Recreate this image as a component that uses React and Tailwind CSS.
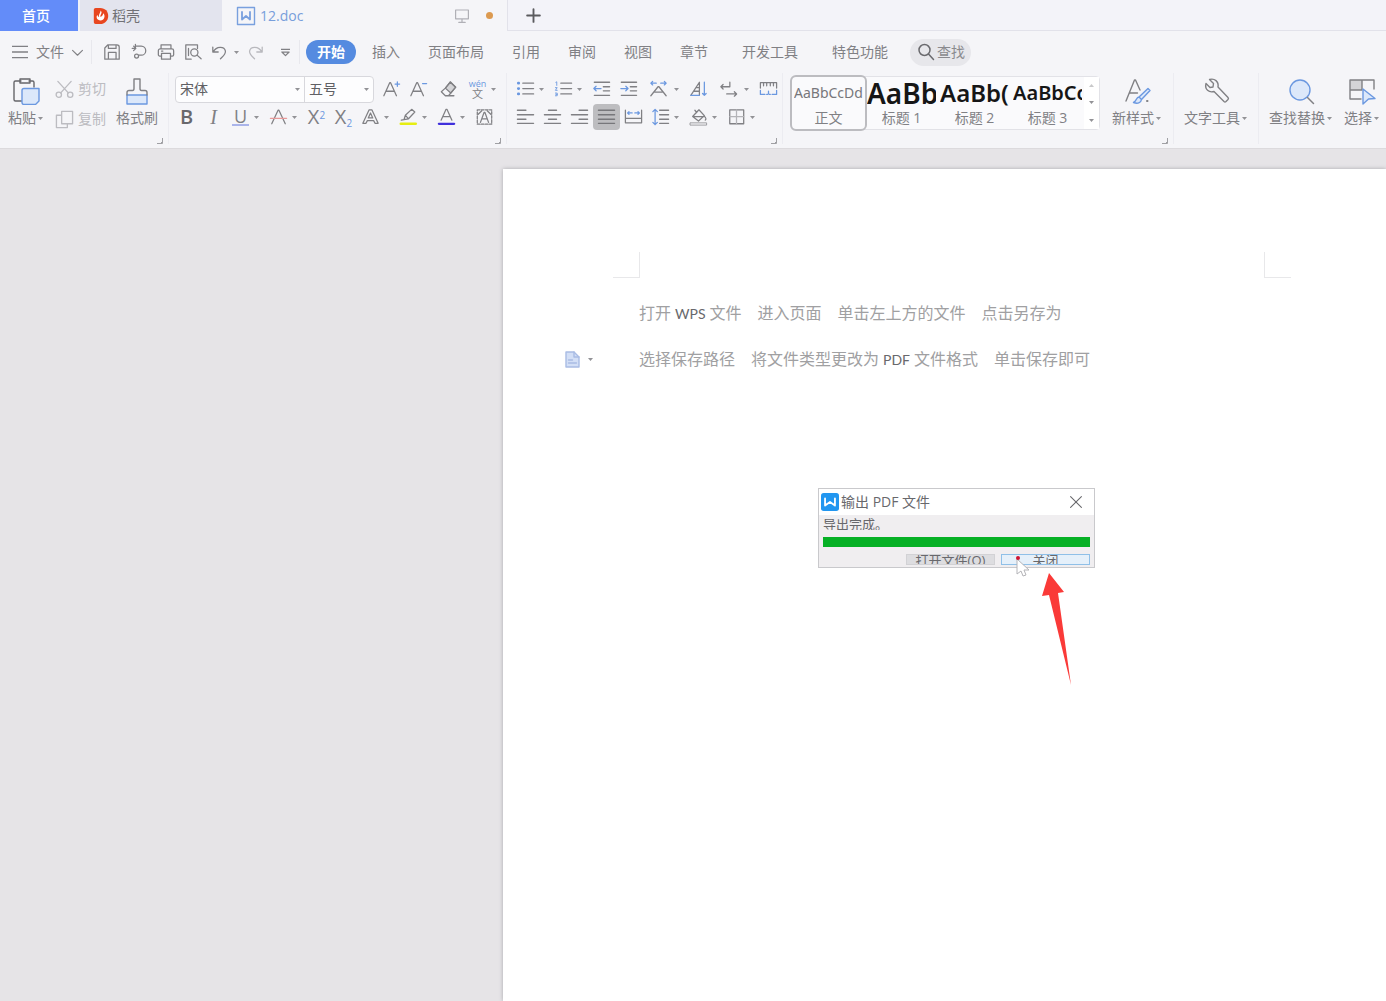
import { Fragment } from "react";

const blue = "#6b98e0";

const Icon = ({ children, className = "w-5 h-5", box = "0 0 20 20" }) => (
    <svg
        className={`shrink-0 ${className}`}
        viewBox={box}
        fill="none"
        stroke="currentColor"
        strokeWidth={1.4}
        strokeLinecap="round"
        strokeLinejoin="round"
        aria-hidden="true"
    >
        {children}
    </svg>
);

const Caret = () => (
    <svg className="w-[5px] h-[3px] shrink-0" viewBox="0 0 5 3" aria-hidden="true">
        <path d="M0 0h5L2.500 3z" fill="#929296" />
    </svg>
);

const Corner = () => (
    <svg className="absolute right-[5px] bottom-0 w-1.5 h-1.5" viewBox="0 0 6 6" fill="none" stroke="#a0a0a4" aria-hidden="true">
        <path d="M5.500 0v5.500H0M3.500 5.500l2-2" />
    </svg>
);

const icons = {
    save: <path d="M2 18v-12.500l3.500-3.500h10a2.500 2.500 0 012.500 2.500v13.500zM6 2.500v3.500h8.500V3M6 17.500v-7h8.500v7" />,
    export: <path d="M2.500 6h3M6.500 3.500h6a5 5 0 010 10H9.500M6 1.500v4M4 3.500L6.500 6 4 8.500M9.500 14.500a2.200 2.200 0 11-2.200-2.200c1.500 0 2.200 1 2.200 2.200z" />,
    print: (
        <>
            <path d="M4.500 6.500V2h11v4.500M5 14.500H3a1.500 1.500 0 01-1.500-1.500V8.500a2 2 0 012-2h13a2 2 0 012 2V13a1.500 1.500 0 01-1.500 1.500h-2" />
            <path d="M5 11.500h10v6.500H5zM5 9h1.500" />
        </>
    ),
    preview: (
        <>
            <path d="M8 18H2V2h13v4" />
            <circle cx="11.500" cy="10.500" r="4" />
            <path d="M14.500 13.500l4.500 4M5 6v8" />
        </>
    ),
    undo: <path d="M2 4.500v5.500h6M2.500 10C6 3 15 3.500 16 9c.4 3.500-2.500 5.500-5.500 8.500" />,
    redo: <path d="M18 4.500v5.500h-6M17.500 10C14 3 5 3.500 4 9c-.4 3.500 2.500 5.500 5.500 8.500" />,
    grow: (
        <>
            <path d="M1.500 17.500L8 3h1l6.500 14.500M4.500 12.500h8" />
            <path d="M16.500 2v5M14 4.500h5" stroke={blue} />
        </>
    ),
    shrink: (
        <>
            <path d="M1.500 17.500L8 3h1l6.500 14.500M4.500 12.500h8" />
            <path d="M14.500 4h4.500" stroke={blue} />
        </>
    ),
    eraser: (
        <>
            <path d="M6.500 9l5.500-6.500 6 5.500-5.500 6.500z" fill="#d4d4d7" />
            <path d="M6.500 9L2 13l4.500 4.500h3.500L18 8l-6-6zM9 17.500h7" />
        </>
    ),
    strike: (
        <>
            <path d="M2.500 17.500L9.500 2.500h1l7 15" />
            <path d="M1 11.500h18" stroke="#e89a9a" />
        </>
    ),
    outlineA: (
        <>
            <path d="M1.500 17L8.500 2h3l7 15h-3.500l-1.500-3h-7L5 17z" />
            <path d="M7.500 11L10 5.500l2.500 5.500z" />
        </>
    ),
    highlight: (
        <>
            <path d="M5 13l1.500-5L13.500 1.500l3.500 3-7 7.500zM6.500 8l3.500 4M5 13l-3 .500" />
            <path d="M1.500 17.500h16.500" stroke="#e6ee12" strokeWidth={3} />
        </>
    ),
    fontColor: (
        <>
            <path d="M4 13.500L9.500 1.500h1L16 13.500M6.500 9.500h7" />
            <path d="M1.500 17.500h17" stroke="#4030dc" strokeWidth={2.500} />
        </>
    ),
    boxedA: (
        <>
            <path d="M2 2h16v16H2z" strokeDasharray="3 1.500" />
            <path d="M5.500 16L9.500 5h1l4 11M7 12h6M3 7l4-4M13 3l4 4" />
        </>
    ),
    bullets: (
        <>
            <path d="M7 3.500h12M7 9.500h12M7 15.500h12" />
            <path d="M2 3.500h.500M2 9.500h.500M2 15.500h.500" stroke={blue} strokeWidth={3} />
        </>
    ),
    numbers: (
        <>
            <path d="M7 3.500h12M7 9.500h12M7 15.500h12" />
            <path d="M1.500 2.500l1-.500v4M1 8.500h2l-2 3h2M1 14.500h2v3H1M1.500 16h1.500" stroke={blue} strokeWidth={1} />
        </>
    ),
    outdent: (
        <>
            <path d="M2 2.500h17M12 7.500h7M12 12h7M2 17h17" />
            <path d="M9.500 9.500H1.500M4 7L1.500 9.500 4 12" stroke={blue} />
        </>
    ),
    indent: (
        <>
            <path d="M2 2.500h17M12 7.500h7M12 12h7M2 17h17" />
            <path d="M1.500 9.500h8M7 7l2.500 2.500L7 12" stroke={blue} />
        </>
    ),
    asian: (
        <>
            <path d="M1.500 17.500L9.500 7.500h1l8 10M6 13.500h8" />
            <path d="M7.500 3.500H1.500M3.500 1.500l-2 2 2 2M12.500 3.500h6M16.500 1.500l2 2-2 2" stroke={blue} />
        </>
    ),
    sort: (
        <>
            <path d="M1.500 17L11 2.500v14.500M5 12.500h6M8 8.500h3" />
            <path d="M1.500 17H11M16.500 2.500v14.500M14.500 15l2 2 2-2" stroke={blue} />
        </>
    ),
    tabs: <path d="M11.500 2.500v5H1.500M4 5L1.500 7.500 4 10M8 15.500h11M16.500 13l2.500 2.500-2.500 2.500" />,
    ruler: (
        <>
            <path d="M1 9V3h18v6M4.500 3.500v3M8 3.500v3M12 3.500v3M15.500 3.500v3" />
            <path d="M1 11.500V16h5M14 16h5v-4.500M8 16h1M11 16h1M10 12.500v3" stroke={blue} />
        </>
    ),
    left: <path d="M1 2.500h9.500M1 7.500h18M1 12.500h9.500M1 17h18" />,
    center: <path d="M5.500 2.500h9M1 7.500h18M5.500 12.500h9M1 17h18" />,
    right: <path d="M9.500 2.500H19M1 7.500h18M9.500 12.500H19M1 17h18" />,
    justify: <path d="M1 2.500h18M1 7.500h18M1 12.500h18M1 17h18" />,
    distribute: (
        <>
            <path d="M1 2.500v14h18v-14M1 11.500h18" />
            <path d="M8.500 5.500h-5M5 4L3.500 5.500 5 7M11.500 5.500h5M15 4l1.500 1.500L15 7" stroke={blue} />
        </>
    ),
    spacing: (
        <>
            <path d="M9 2.500h10M9 7.500h10M9 12.500h10M9 17h10" />
            <path d="M4 1.500v17M1.500 4L4 1.500 6.500 4M1.500 16L4 18.500 6.500 16" stroke={blue} />
        </>
    ),
    fill: (
        <>
            <path d="M3.500 9.500l7-7.500 6 6.500-6.500 6zM3.500 9.500h13M8 5L6 2.500M16.500 9c1.500 1.500 2.500 3 1 4.500" />
            <path d="M1 16.500h18v2.500H1z" strokeWidth={0.8} />
        </>
    ),
    border: (
        <>
            <path d="M2.500 2h15.500v15.500H2.500z" />
            <path d="M10 2v15.500M2.500 9.500h15.500" stroke="#b4b4b8" />
        </>
    ),
};

// text glyph tools use real letters instead of a drawing
const glyphs = {
    bold: <span className="text-xl leading-5 font-semibold text-[#68686c]">B</span>,
    italic: <span className="font-['Liberation_Serif',serif] text-xl leading-5 italic">I</span>,
    underline: <span className="text-lg leading-4 border-b-2 border-[#aab4ea] px-0.5">U</span>,
    sup: <span className="text-xl leading-5">X<sup className="text-[10px] text-[#6b98e0]">2</sup></span>,
    sub: <span className="text-xl leading-5">X<sub className="text-[10px] text-[#6b98e0]">2</sub></span>,
    pinyin: (
        <span className="flex flex-col items-center">
            <span className="text-[9px] leading-[9px] text-[#6b98e0]">wén</span>
            <span className="text-[11px] leading-[12px]">文</span>
        </span>
    ),
};

const fontTop = [
    { id: "grow", label: "增大字号" },
    { id: "shrink", label: "减小字号" },
    { id: "eraser", label: "清除格式", wide: true },
    { id: "pinyin", label: "拼音指南", menu: true },
];

const fontBottom = [
    { id: "bold", label: "加粗" },
    { id: "italic", label: "倾斜" },
    { id: "underline", label: "下划线", menu: true },
    { id: "strike", label: "删除线", menu: true },
    { id: "sup", label: "上标" },
    { id: "sub", label: "下标" },
    { id: "outlineA", label: "文字效果", menu: true },
    { id: "highlight", label: "突出显示", menu: true },
    { id: "fontColor", label: "字体颜色", menu: true },
    { id: "boxedA", label: "字符底纹" },
];

const paraTop = [
    { id: "bullets", label: "项目符号", menu: true },
    { id: "numbers", label: "编号", menu: true },
    { id: "outdent", label: "减少缩进量" },
    { id: "indent", label: "增加缩进量" },
    { id: "asian", label: "中文版式", wide: true, menu: true },
    { id: "sort", label: "排序" },
    { id: "tabs", label: "显示编辑标记", wide: true, menu: true },
    { id: "ruler", label: "制表位" },
];

const paraBottom = [
    { id: "left", label: "左对齐" },
    { id: "center", label: "居中对齐" },
    { id: "right", label: "右对齐" },
    { id: "justify", label: "两端对齐", active: true },
    { id: "distribute", label: "分散对齐" },
    { id: "spacing", label: "行距", menu: true },
    { id: "fill", label: "底纹颜色", menu: true },
    { id: "border", label: "边框", menu: true },
];

const menus = ["插入", "页面布局", "引用", "审阅", "视图", "章节"];

const styles = [
    { name: "正文", sample: "AaBbCcDd", cls: "text-sm text-[#77777b]", active: true },
    { name: "标题 1", sample: "AaBb", cls: "text-[28px] font-semibold text-[#161616]" },
    { name: "标题 2", sample: "AaBb(", cls: "text-2xl font-semibold text-[#161616]" },
    { name: "标题 3", sample: "AaBbCc", cls: "text-xl font-semibold text-[#161616]" },
];

const ToolRow = ({ items }) => (
    <div className="flex items-center h-7">
        {items.map((t) => (
            <button key={t.id} aria-label={t.label} className="flex items-center h-[26px]">
                <span
                    className={`flex items-center justify-center h-[26px] ${t.wide ? "w-8" : "w-[27px]"} ${t.active ? "bg-[#bdbdc0] rounded-sm text-[#77777b]" : ""}`}
                >
                    {glyphs[t.id] || <Icon className="w-[19px] h-[18px]">{icons[t.id]}</Icon>}
                </span>
                {t.menu && (
                    <span className="w-[11px] flex">
                        <Caret />
                    </span>
                )}
            </button>
        ))}
    </div>
);

const BigButton = ({ icon, label, menu = true }) => (
    <button className="flex flex-col items-center shrink-0 h-[54px]">
        <span className="h-8 flex items-center">{icon}</span>
        <span className="flex items-center gap-0.5 text-sm leading-[22px] whitespace-nowrap">
            {label}
            {menu && <Caret />}
        </span>
    </button>
);

const Divider = () => <div className="w-px h-6 bg-[#e8e8ed]" />;

const TabBar = () => (
    <div className="flex h-[31px] bg-[#f0f1f8] text-sm">
        <button className="w-[78px] pr-1.5 bg-[#638cf9] text-white font-medium">首页</button>
        <button className="w-[142px] ml-0.5 pl-3 flex items-center gap-0.5 bg-[#e3e4ee] text-[#717175]">
            <Icon className="w-[18px] h-[18px]">
                <path d="M4 1h5c6 0 9 4 9 9s-4 9-9 9H4a2 2 0 01-2-2V3a2 2 0 012-2z" fill="#e8461f" stroke="none" />
                <path d="M9.500 4c3 3-1 4.500 0 7 2-.5 2.500-2 3-4 3 3 1 8-3 8s-5.500-4-3.500-6c.5 1.500 1 2 2 2C7 8.500 9.500 7 9.500 4z" fill="#fff" stroke="none" />
            </Icon>
            稻壳
        </button>
        <div className="w-[286px] flex items-center px-3.5 border-r border-[#e2e2ea] bg-[#f5f5f8]">
            <Icon className="w-5 h-5 text-[#79a0de]">
                <path d="M1.500 1.500h17v17h-17z" />
                <path d="M6 6v7.500l4-3.500 4 3.500V6" strokeWidth={1.800} />
            </Icon>
            <span className="pl-1 text-[#789edb]">12.doc</span>
            <Icon className="w-4 h-4 ml-auto text-[#b0b0b6]">
                <path d="M2 2.500h16v11H2zM10 13.500V18M6 18h8" strokeWidth={1.500} />
            </Icon>
            <span className="w-[7px] h-[7px] ml-4 rounded-full bg-[#dc9a50]" />
        </div>
        <button aria-label="新建" className="w-[50px] flex items-center justify-center border-b border-[#e2e2ea] bg-[#f3f3f9] text-[#5a5a5e]">
            <Icon className="w-[15px] h-[15px]">
                <path d="M10 1.500v17M1.500 10h17" strokeWidth={2.500} />
            </Icon>
        </button>
        <div className="flex-1 border-b border-[#e2e2ea] bg-[#f3f3f9]" />
    </div>
);

const MenuBar = () => (
    <nav className="flex items-center h-[42px] pl-3 text-sm whitespace-nowrap">
        <button className="flex items-center gap-2">
            <Icon className="w-4 h-4">
                <path d="M0 3h20M0 10h20M0 17h20" strokeWidth={1.800} />
            </Icon>
            文件
            <Icon className="w-[11px] h-[11px]">
                <path d="M1 6l9 9 9-9" strokeWidth={2} />
            </Icon>
        </button>
        <div className="pl-2 pr-1.5">
            <Divider />
        </div>
        {["save", "export", "print", "preview", "undo"].map((id) => (
            <button key={id} aria-label={id} className="w-[27px] flex justify-center">
                <Icon className="w-[18px] h-[18px]">{icons[id]}</Icon>
            </button>
        ))}
        <span className="w-1.5 flex justify-center">
            <Caret />
        </span>
        <button aria-label="redo" className="w-8 flex justify-center text-[#b8b8bd]">
            <Icon className="w-[18px] h-[18px]">{icons.redo}</Icon>
        </button>
        <button aria-label="more" className="w-7 flex justify-center">
            <Icon className="w-[9px] h-[9px]" box="0 0 10 10">
                <path d="M0 1.500h10M1 4.500h8L5 8.500z" />
            </Icon>
        </button>
        <Divider />
        <button className="ml-1.5 mr-0.5 w-[50px] h-6 rounded-full bg-[#558be0] text-white font-bold">开始</button>
        {menus.map((m) => (
            <button key={m} className="px-3.5">
                {m}
            </button>
        ))}
        <button className="pl-5 pr-3.5">开发工具</button>
        <button className="pl-5 pr-4">特色功能</button>
        <button className="ml-1.5 h-[27px] px-1.5 flex items-center gap-px rounded-full bg-[#e7e7eb] text-[#8a8a8e]">
            <Icon className="w-5 h-5 text-[#6a6a6e]">
                <circle cx="8.500" cy="8" r="5.500" strokeWidth={1.500} />
                <path d="M12.500 12l5 5.500" strokeWidth={1.500} />
            </Icon>
            查找
        </button>
    </nav>
);

const FontSelect = ({ label, value, className }) => (
    <div className={`relative flex items-center ${className}`}>
        <select aria-label={label} defaultValue={value} className="w-full h-[25px] pl-1 appearance-none bg-transparent text-sm text-[#606064] outline-none">
            <option>{value}</option>
        </select>
        <span className="absolute right-1 pointer-events-none">
            <Caret />
        </span>
    </div>
);

const Ribbon = () => (
    <div className="flex h-[75px] pb-1">
        <section className="relative w-[169px] shrink-0 flex items-start pt-0.5 pl-2 border-r border-[#ececf1]">
            <BigButton
                label="粘贴"
                icon={
                    <Icon className="w-7 h-7" box="0 0 28 28">
                        <path d="M9 4H3.500a1.500 1.500 0 00-1.500 1.500v17A1.500 1.500 0 003.500 24H10M17 4h3.500A1.500 1.500 0 0122 5.500V10M8 2h10v4H8z" stroke="#66666a" />
                        <path d="M12 11.500h15V24l-3.500 3.500H12a2 2 0 01-2-2v-12a2 2 0 012-2z" fill="#dce8fa" stroke={blue} />
                    </Icon>
                }
            />
            <div className="flex flex-col pl-3 text-sm text-[#bcbcc1]">
                <button className="h-7 flex items-center gap-1">
                    <Icon className="w-[19px] h-[19px]">
                        <path d="M3 1.500l11 12M17 1.500L6 13.500" />
                        <circle cx="4" cy="15.500" r="2.800" />
                        <circle cx="16" cy="15.500" r="2.800" />
                    </Icon>
                    剪切
                </button>
                <button className="h-8 flex items-center gap-1">
                    <Icon className="w-[19px] h-[19px]">
                        <path d="M7 1.500h11.500v13H7zM7 5.500H1.500v13H13v-4" />
                    </Icon>
                    复制
                </button>
            </div>
            <div className="pl-2.5">
                <BigButton
                    label="格式刷"
                    menu={false}
                    icon={
                        <Icon className="w-7 h-7" box="0 0 28 28">
                            <path d="M4 18h20v9H4z" fill="#dce8fa" stroke={blue} />
                            <path d="M4 18v-2.500a2 2 0 012-2h3.500q1.500 0 1.500-2V2h6v9.500q0 2 1.500 2H22a2 2 0 012 2V18" />
                        </Icon>
                    }
                />
            </div>
            <Corner />
        </section>

        <section className="relative w-[338px] shrink-0 pt-0.5 pl-1 border-r border-[#ececf1]">
            <div className="flex items-center gap-1 pl-0.5">
                <div className="flex shrink-0 bg-[#fdfdfe] border border-[#d8d8dd] rounded-sm">
                    <FontSelect label="字体" value="宋体" className="w-[129px] border-r border-[#d8d8dd]" />
                    <FontSelect label="字号" value="五号" className="w-[68px]" />
                </div>
                <ToolRow items={fontTop} />
            </div>
            <ToolRow items={fontBottom} />
            <Corner />
        </section>

        <section className="relative w-[276px] shrink-0 pt-0.5 pl-[5px] border-r border-[#ececf1]">
            <ToolRow items={paraTop} />
            <ToolRow items={paraBottom} />
            <Corner />
        </section>

        <section className="relative w-[391px] shrink-0 flex items-start pt-0.5 pl-2 border-r border-[#ececf1]">
            <div className="flex w-[309px] h-[54px] mt-px mr-3 border border-[#e2e2e7] rounded-sm bg-[#fafafc]">
                {styles.map((s) => (
                    <button
                        key={s.name}
                        className={`flex-1 min-w-0 h-[52px] overflow-hidden flex flex-col items-start rounded-sm ${s.active ? "outline-2 outline-[#bcbcc0]" : ""}`}
                    >
                        <span className="h-8 px-0.5 flex items-center w-full">
                            <span className={`overflow-hidden leading-8 whitespace-nowrap font-['Noto_Sans',sans-serif] ${s.cls}`}>{s.sample}</span>
                        </span>
                        <span className="w-full text-center text-sm leading-[18px]">{s.name}</span>
                    </button>
                ))}
                <div className="w-[15px] flex flex-col items-center justify-around bg-white">
                    {["up", "down", "all"].map((d) => (
                        <button key={d} aria-label={d} className={`h-4 flex items-center ${d === "up" ? "rotate-180 opacity-50" : ""}`}>
                            <Caret />
                        </button>
                    ))}
                </div>
            </div>
            <BigButton
                label="新样式"
                icon={
                    <Icon className="w-7 h-7" box="0 0 28 28">
                        <path d="M3 24L11.500 3h1L17 13M6.500 16h8" />
                        <path d="M25 11.500l2 2-8.500 9-2.500-2.500zM16 20c-3 0-2 4-5.500 5.500 4 1.500 7.500.5 8-3z" fill="#dce8fa" stroke={blue} />
                        <path d="M24 24h.500" strokeWidth={2} />
                    </Icon>
                }
            />
            <Corner />
        </section>

        <section className="w-[85px] shrink-0 pt-0.5 pl-2.5 flex border-r border-[#ececf1]">
            <BigButton
                label="文字工具"
                icon={
                    <Icon className="w-7 h-7" box="0 0 28 28">
                        <path d="M7.500 2.500c5-1.500 9.500 2 8.500 7.500l10 10.500a1.500 1.500 0 010 2l-2 2a1.500 1.500 0 01-2 0L12 14.500c-5 1.500-9.500-2-8-8l4 4 3-.500.500-3.500z" />
                    </Icon>
                }
            />
        </section>

        <section className="shrink-0 pt-0.5 pl-2.5 flex gap-3">
            <BigButton
                label="查找替换"
                icon={
                    <Icon className="w-7 h-7" box="0 0 28 28">
                        <circle cx="13" cy="13" r="10" fill="#dce8fa" stroke={blue} />
                        <path d="M20.500 20.500l6 6" strokeWidth={1.500} />
                    </Icon>
                }
            />
            <BigButton
                label="选择"
                icon={
                    <Icon className="w-7 h-7" box="0 0 28 28">
                        <path d="M2 3h12v10H2z" fill="#d4d4d7" stroke="none" />
                        <path d="M13 22H2V3h24v9M14 3v10H2" />
                        <path d="M15 12l12 9.500-6.500.5L15 27z" fill="#dce8fa" stroke={blue} />
                    </Icon>
                }
            />
        </section>
    </div>
);

const Dialog = () => (
    <div role="dialog" aria-label="输出 PDF 文件" className="absolute left-[315px] top-[319px] w-[277px] border border-[#c9c9cc] bg-[#f0eef0] text-[#68686c]">
        <div className="flex items-center h-[26px] pl-0.5 pr-3 bg-white text-sm">
            <Icon className="w-[18px] h-[18px]">
                <rect width="20" height="20" rx="3" fill="#2196f0" stroke="none" />
                <path d="M4.500 6v8l5.500-4 5.500 4V6" stroke="#fff" strokeWidth={2} />
            </Icon>
            <span className="pl-0.5">输出 PDF 文件</span>
            <button aria-label="关闭窗口" className="ml-auto">
                <Icon className="w-3 h-3">
                    <path d="M1 1l18 18M19 1L1 19" strokeWidth={1.800} />
                </Icon>
            </button>
        </div>
        <div className="px-1 pb-0.5">
            <p className="h-[15px] mb-[7px] overflow-hidden text-[13px] leading-[18px]">导出完成。</p>
            <div role="progressbar" aria-valuenow={100} className="h-2.5 bg-[#06b025]" />
            <div className="flex justify-end gap-1.5 pt-[7px] text-[13px] leading-[10px]">
                <button className="w-[89px] h-[11px] overflow-hidden flex items-center justify-center bg-[#dddde0] border border-[#d2d2d5]">打开文件(O)</button>
                <button className="w-[89px] h-[11px] overflow-hidden flex items-center justify-center bg-[#e5f0fa] border border-[#8fc0e8]">关闭</button>
            </div>
        </div>
        {/* mouse pointer */}
        <svg className="absolute left-[196px] top-[65px] w-4 h-[23px]" viewBox="0 0 16 23" aria-hidden="true">
            <path d="M2 5v15l4-3 2 5 3-1-2-5h5z" fill="#fff" stroke="#b4b4b8" />
            <circle cx="3" cy="4" r="2" fill="#cf1232" />
        </svg>
    </div>
);

const paragraphs = [
    ["打开", "WPS", "文件　进入页面　单击左上方的文件　点击另存为"],
    ["选择保存路径　将文件类型更改为", "PDF", "文件格式　单击保存即可"],
];

const Page = () => (
    <article className="relative flex-1 ml-[503px] mt-5 bg-white shadow-[0_0_4px_#a8a8ac]">
        <div className="flex pt-[83px] pl-[110px]">
            <div className="w-[27px] h-[26px] border-r border-b border-[#e8e8ea]" />
            <div className="w-[624px]" />
            <div className="w-[27px] h-[26px] border-l border-b border-[#e8e8ea]" />
        </div>
        <div className="pt-3 pl-[62px] text-base text-[#a0a0a2]">
            {paragraphs.map(([before, latin, after], i) => (
                <Fragment key={latin}>
                    <div className="flex items-center h-[46px]">
                        <div className="w-[74px] shrink-0">
                            {i === 1 && (
                                <button aria-label="段落布局" className="flex items-center gap-2">
                                    <Icon className="w-[15px] h-[17px] text-[#a9bce4]" box="0 0 15 17">
                                        <path d="M1 1h8l5 5v10H1z" fill="#d3dff6" />
                                        <path d="M9 1v5h5M3.500 9h4M3.500 12h8" />
                                    </Icon>
                                    <Caret />
                                </button>
                            )}
                        </div>
                        <p>
                            {before}
                            <span className="px-1 font-['Lato',sans-serif] text-sm text-[#68686c]">{latin}</span>
                            {after}
                        </p>
                    </div>
                </Fragment>
            ))}
        </div>
        <Dialog />
        {/* red pointer towards the close button */}
        <svg className="absolute left-[538px] top-[403px] w-8 h-[114px]" viewBox="0 0 32 114" aria-hidden="true">
            <path d="M8 1l15 19-6 1 13 92L8 23l-7 1z" fill="#fa3a38" />
        </svg>
    </article>
);

const App = () => (
    <div className="min-h-screen flex flex-col overflow-hidden bg-[#e6e4e7] font-['Open_Sans','Noto_Sans_CJK_SC',sans-serif] text-[#808084]">
        <header className="bg-[#f5f5f8] border-b border-[#dcdadd]">
            <TabBar />
            <MenuBar />
            <Ribbon />
        </header>
        <main className="flex-1 flex flex-col">
            <Page />
        </main>
    </div>
);

export default App;
